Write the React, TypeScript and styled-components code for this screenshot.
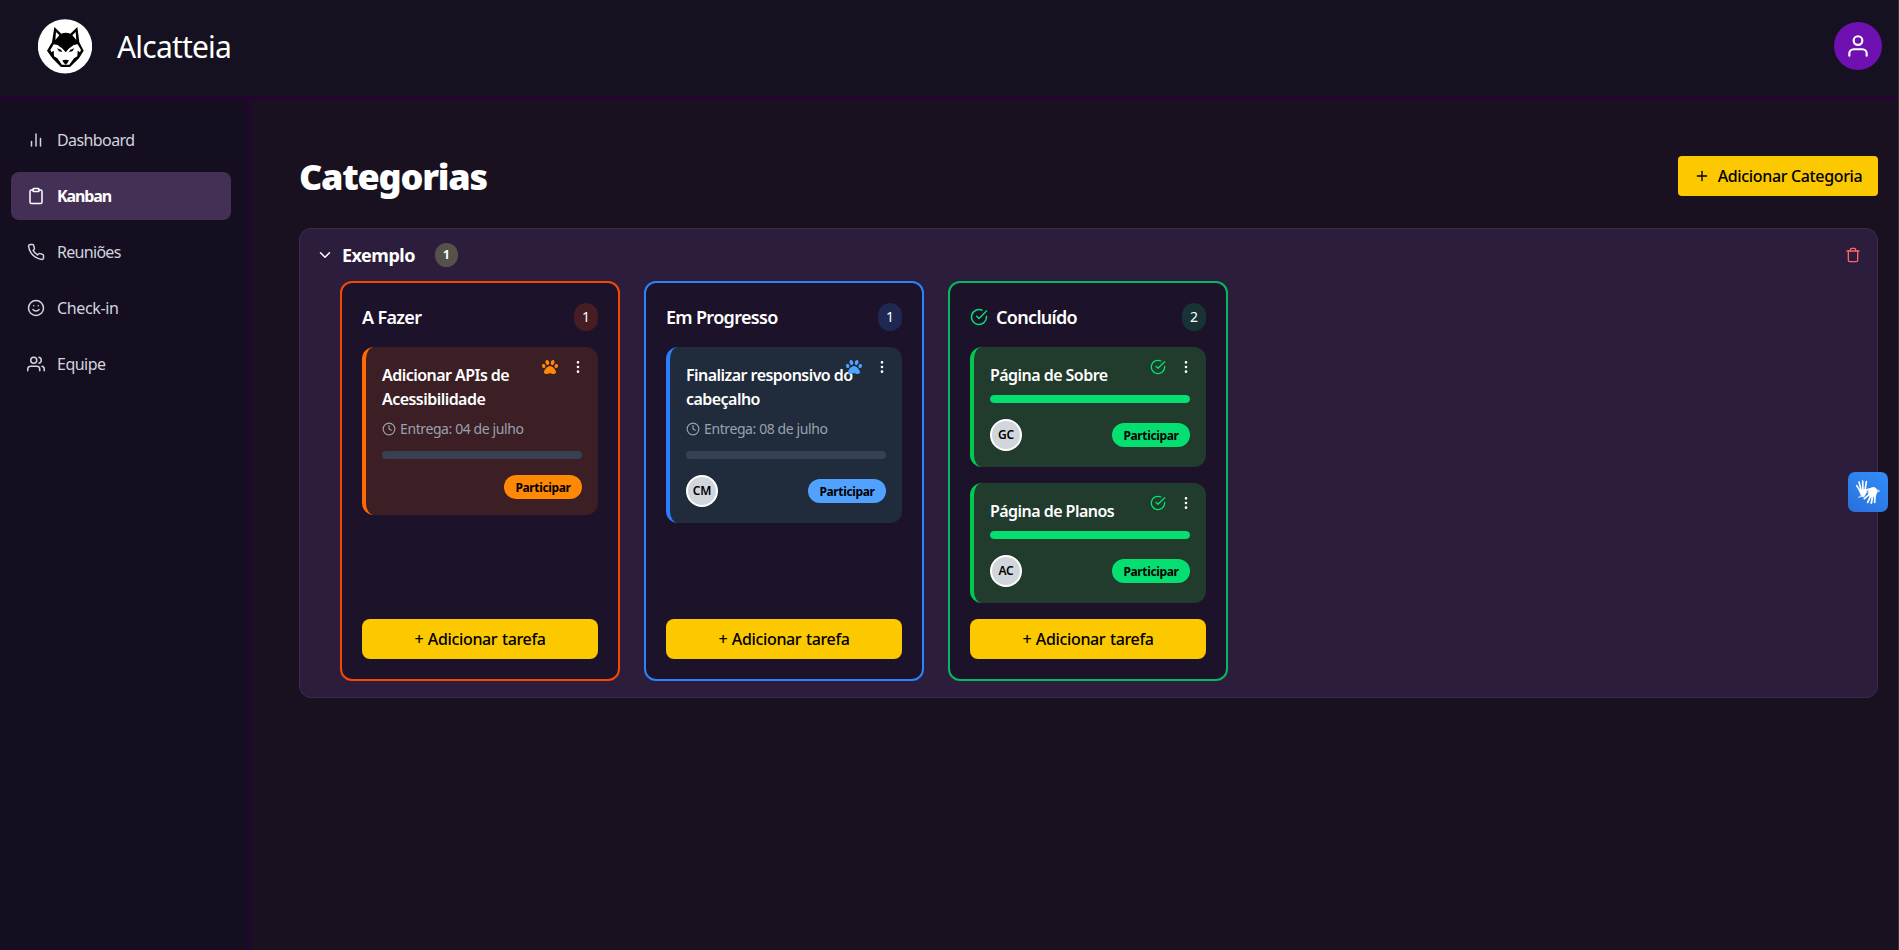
import React from "react";
import styled, { createGlobalStyle } from "styled-components";
import {
  FiBarChart2,
  FiCheckCircle,
  FiChevronDown,
  FiClipboard,
  FiClock,
  FiMoreVertical,
  FiPhone,
  FiPlus,
  FiSmile,
  FiTrash,
  FiUser,
  FiUsers,
} from "react-icons/fi";
import { FaPaw } from "react-icons/fa";

const GlobalStyle = createGlobalStyle`
  *, *::before, *::after { box-sizing: border-box; }
  body {
    margin: 0;
    background: #1a1120;
    color: #fff;
    font-family: "Segoe UI", "Noto Sans", "Open Sans", sans-serif;
    font-size: 16px;
    line-height: 24px;
    overflow: hidden;
  }
  svg { display: block; flex: none; }
  button { font: inherit; color: inherit; border: 0; padding: 0; background: none; cursor: pointer; }
`;

const Page = styled.div`
  display: flex;
  flex-direction: column;
  height: 100vh;
  border-right: 1px solid #353638;
`;

const Header = styled.header`
  display: flex;
  align-items: center;
  justify-content: space-between;
  flex: none;
  height: 100px;
  padding: 0 16px 4px 38px;
  background: #151120;
  border-bottom: 4px solid #23062f;
`;

const Brand = styled.div`
  display: flex;
  align-items: center;
  gap: 25px;
`;

const BrandName = styled.span`
  font-size: 30px;
  line-height: 36px;
  letter-spacing: -0.8px;
  padding-top: 1px;
`;

const ProfileButton = styled.button`
  display: grid;
  place-items: center;
  width: 48px;
  height: 48px;
  border-radius: 50%;
  background: #6e11b0;
`;

const Body = styled.div`
  display: flex;
  flex: 1;
  min-height: 0;
`;

const Sidebar = styled.nav`
  display: flex;
  flex-direction: column;
  gap: 8px;
  flex: none;
  width: 251px;
  padding: 16px 16px 0 11px;
  background: #150e21;
  border-right: 4px solid #23062f;
`;

const NavItem = styled.a<{ $active?: boolean; $tracking: number }>`
  display: flex;
  align-items: center;
  gap: 12px;
  height: 48px;
  padding: 0 16px;
  border-radius: 8px;
  letter-spacing: ${(p) => p.$tracking}px;
  background: ${(p) => (p.$active ? "#443055" : "transparent")};
  color: ${(p) => (p.$active ? "#fff" : "#d1d5dc")};
  font-weight: ${(p) => (p.$active ? 700 : 400)};
`;

const Main = styled.main`
  flex: 1;
  padding: 56px 20px 0 48px;
`;

const TitleRow = styled.div`
  display: flex;
  align-items: flex-start;
  justify-content: space-between;
  height: 72px;
`;

const Title = styled.h1`
  margin: 0;
  padding-top: 1px;
  font-size: 36px;
  line-height: 40px;
  font-weight: 900;
  letter-spacing: -1.25px;
`;

const AddCategory = styled.button`
  display: flex;
  align-items: center;
  justify-content: center;
  gap: 8px;
  width: 200px;
  height: 40px;
  border-radius: 4px;
  background: #fcc800;
  color: #000;
  font-weight: 500;
  letter-spacing: -0.35px;
`;

const Panel = styled.section`
  border: 1px solid #3c2c4b;
  border-radius: 12px;
  padding: 12px 16px 16px;
  background: #2b1d3b;
`;

const PanelHeader = styled.div`
  display: flex;
  align-items: center;
  height: 28px;
  margin-bottom: 12px;
`;

const PanelTitle = styled.h2`
  margin: 0 20px 0 8px;
  font-size: 18px;
  line-height: 28px;
  font-weight: 700;
  letter-spacing: -0.5px;
`;

const PanelCount = styled.span`
  display: grid;
  place-items: center;
  width: 23px;
  height: 24px;
  border-radius: 12px;
  background: #57514b;
  font-size: 12px;
  font-weight: 700;
`;

const DeleteButton = styled.button`
  margin-left: auto;
  color: #ff6467;
`;

const Columns = styled.div`
  display: flex;
  gap: 24px;
  padding-left: 24px;
`;

const Column = styled.section<{ $border: string }>`
  display: flex;
  flex-direction: column;
  width: 280px;
  height: 400px;
  padding: 20px;
  border: 2px solid ${(p) => p.$border};
  border-radius: 12px;
  background: #1c1229;
`;

const ColumnHeader = styled.div`
  display: flex;
  align-items: center;
  gap: 8px;
  height: 28px;
  margin-bottom: 16px;
`;

const ColumnTitle = styled.h3`
  margin: 0;
  font-size: 18px;
  line-height: 28px;
  font-weight: 600;
  letter-spacing: -0.68px;
`;

const ColumnCount = styled.span<{ $bg: string }>`
  display: grid;
  place-items: center;
  width: 24px;
  height: 28px;
  margin-left: auto;
  border-radius: 12px;
  background: ${(p) => p.$bg};
  font-size: 14px;
`;

const CardList = styled.div`
  display: flex;
  flex: 1;
  flex-direction: column;
  gap: 16px;
`;

const Card = styled.article<{ $bg: string; $edge: string }>`
  position: relative;
  padding: 16px;
  border-left: 4px solid ${(p) => p.$edge};
  border-radius: 12px;
  background: ${(p) => p.$bg};
`;

const CardTools = styled.div`
  position: absolute;
  top: 12px;
  right: 12px;
  display: flex;
  gap: 12px;
`;

const CardTitle = styled.h4`
  margin: 0 0 8px;
  font-size: 16px;
  line-height: 24px;
  font-weight: 600;
  letter-spacing: -0.54px;
  white-space: pre-line;
`;

const DueDate = styled.div`
  display: flex;
  align-items: center;
  gap: 4px;
  height: 20px;
  margin-bottom: 12px;
  color: #99a1af;
  font-size: 14px;
  line-height: 20px;
  letter-spacing: -0.4px;
`;

const Track = styled.div`
  height: 8px;
  margin-bottom: 16px;
  border-radius: 4px;
  background: #364153;
  overflow: hidden;
`;

const Fill = styled.div`
  height: 100%;
  border-radius: 4px;
  background: #05df72;
`;

const CardFooter = styled.div`
  display: flex;
  align-items: center;
`;

const Avatar = styled.span`
  display: grid;
  place-items: center;
  width: 32px;
  height: 32px;
  border: 2px solid #fff;
  border-radius: 50%;
  background: #d1d5dc;
  color: #000;
  font-size: 12px;
  font-weight: 600;
  letter-spacing: -0.2px;
`;

const JoinButton = styled.button<{ $bg: string }>`
  width: 78px;
  height: 24px;
  margin-left: auto;
  padding-top: 1px;
  border-radius: 12px;
  background: ${(p) => p.$bg};
  color: #000;
  font-size: 12px;
  line-height: 23px;
  font-weight: 700;
  letter-spacing: -0.35px;
`;

const AddTask = styled.button`
  height: 40px;
  border-radius: 8px;
  background: #fcc800;
  color: #000;
  font-weight: 500;
  letter-spacing: -0.35px;
  word-spacing: 0.8px;
`;

const SignLanguageButton = styled.button`
  position: fixed;
  top: 472px;
  right: 11px;
  width: 40px;
  height: 40px;
  border-radius: 7px;
  background: linear-gradient(30deg, #2970dc, #338df8);
`;

function WolfLogo() {
  return (
    <svg width="54" height="55" viewBox="114 54 162 165">
      <circle cx="195" cy="136" r="81.5" fill="#fff" />
      <path
        d="M163 78 184 98Q197 93 211 98L232 78 238 124 251 149 237 172 210 198H183L157 172 141 149 156 124Z"
        fill="#000"
      />
      <path
        d="M168 93 178 103 166 117ZM227 93 217 103 229 117ZM161 130 173 132 188 143 197 154 206 143 221 132 233 130 243 147 240 154 233 149 232 166 222 172 208 191H186L172 172 162 166 161 149 154 154 151 147Z"
        fill="#fff"
      />
      <path
        d="M171 142 183 146 187 153 177 151ZM223 142 211 146 207 153 217 151ZM187 178Q197 174 207 178L203 185 197 191 191 185Z"
        fill="#000"
      />
    </svg>
  );
}

function SigningHands() {
  return (
    <svg width="40" height="40" viewBox="0 0 120 120" fill="none" stroke="#fff" strokeLinecap="round" strokeLinejoin="round">
      <path d="M26 41 38 60M33 30 40 56M44 27 45 56M55 29 51 56" strokeWidth="5" />
      <path d="M36 58 52 52 56 60 48 74 41 74Z" fill="#fff" strokeWidth="2" />
      <path d="M32 76 38 73" strokeWidth="4" opacity="0.6" />
      <path d="M49 80 63 68M59 91 69 70M70 93 74 70M80 91 81 68M48 55 68 51" strokeWidth="5.5" />
      <path d="M60 59 68 48 78 46 86 51 87 61 82 73 66 73Z" fill="#fff" strokeWidth="2" />
      <path d="M87 57H92" strokeWidth="7" opacity="0.6" />
    </svg>
  );
}

const navItems = [
  { label: "Dashboard", Icon: FiBarChart2, tracking: -0.6 },
  { label: "Kanban", Icon: FiClipboard, tracking: -1.1, active: true },
  { label: "Reuniões", Icon: FiPhone, tracking: -0.7 },
  { label: "Check-in", Icon: FiSmile, tracking: -0.35 },
  { label: "Equipe", Icon: FiUsers, tracking: -0.5 },
];

type Task = { title: string; due?: string; member?: string };

type Stage = {
  name: string;
  done?: boolean;
  border: string;
  countBg: string;
  cardBg: string;
  edge: string;
  accent: string;
  tasks: Task[];
};

const stages: Stage[] = [
  {
    name: "A Fazer",
    border: "#f54900",
    countBg: "#451d22",
    cardBg: "#3c1f25",
    edge: "#ff6900",
    accent: "#ff8904",
    tasks: [{ title: "Adicionar APIs de\nAcessibilidade", due: "04 de julho" }],
  },
  {
    name: "Em Progresso",
    border: "#2984fb",
    countBg: "#1e2853",
    cardBg: "#202c3b",
    edge: "#2b7fff",
    accent: "#51a2ff",
    tasks: [{ title: "Finalizar responsivo do\ncabeçalho", due: "08 de julho", member: "CM" }],
  },
  {
    name: "Concluído",
    done: true,
    border: "#05b95f",
    countBg: "#183335",
    cardBg: "#213b2d",
    edge: "#00c950",
    accent: "#05df72",
    tasks: [
      { title: "Página de Sobre", member: "GC" },
      { title: "Página de Planos", member: "AC" },
    ],
  },
];

export default function App() {
  return (
    <Page>
      <GlobalStyle />
      <Header>
        <Brand>
          <WolfLogo />
          <BrandName>Alcatteia</BrandName>
        </Brand>
        <ProfileButton aria-label="Perfil">
          <FiUser size={26} />
        </ProfileButton>
      </Header>
      <Body>
        <Sidebar>
          {navItems.map(({ label, Icon, tracking, active }) => (
            <NavItem key={label} $active={active} $tracking={tracking}>
              <Icon size={18} />
              {label}
            </NavItem>
          ))}
        </Sidebar>
        <Main>
          <TitleRow>
            <Title>Categorias</Title>
            <AddCategory>
              <FiPlus size={16} />
              Adicionar Categoria
            </AddCategory>
          </TitleRow>
          <Panel>
            <PanelHeader>
              <FiChevronDown size={18} />
              <PanelTitle>Exemplo</PanelTitle>
              <PanelCount>1</PanelCount>
              <DeleteButton aria-label="Excluir">
                <FiTrash size={16} />
              </DeleteButton>
            </PanelHeader>
            <Columns>
              {stages.map((s) => (
                <Column key={s.name} $border={s.border}>
                  <ColumnHeader>
                    {s.done && <FiCheckCircle size={18} color={s.accent} />}
                    <ColumnTitle>{s.name}</ColumnTitle>
                    <ColumnCount $bg={s.countBg}>{s.tasks.length}</ColumnCount>
                  </ColumnHeader>
                  <CardList>
                    {s.tasks.map((t) => (
                      <Card key={t.title} $bg={s.cardBg} $edge={s.edge}>
                        <CardTitle>{t.title}</CardTitle>
                        <CardTools>
                          {s.done ? (
                            <FiCheckCircle size={16} color={s.accent} />
                          ) : (
                            <FaPaw size={16} color={s.accent} />
                          )}
                          <FiMoreVertical size={16} />
                        </CardTools>
                        {t.due && (
                          <DueDate>
                            <FiClock size={14} />
                            Entrega: {t.due}
                          </DueDate>
                        )}
                        <Track>{s.done && <Fill />}</Track>
                        <CardFooter>
                          {t.member && <Avatar>{t.member}</Avatar>}
                          <JoinButton $bg={s.accent}>Participar</JoinButton>
                        </CardFooter>
                      </Card>
                    ))}
                  </CardList>
                  <AddTask>+ Adicionar tarefa</AddTask>
                </Column>
              ))}
            </Columns>
          </Panel>
        </Main>
      </Body>
      <SignLanguageButton aria-label="Libras">
        <SigningHands />
      </SignLanguageButton>
    </Page>
  );
}
